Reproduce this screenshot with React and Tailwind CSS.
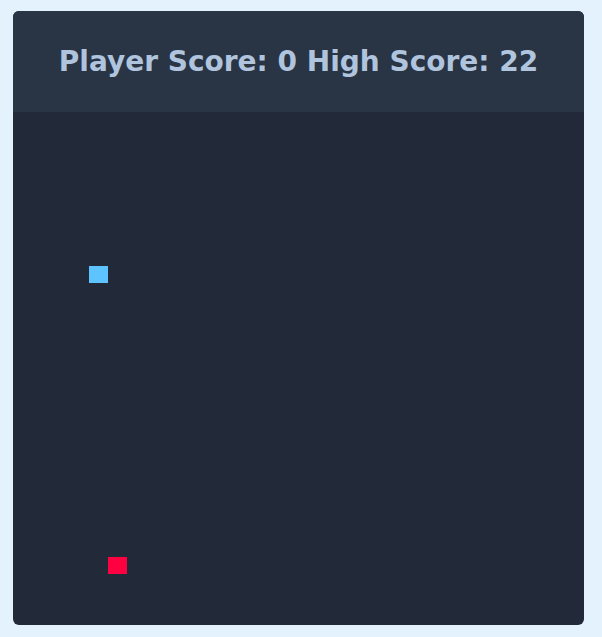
export default function App() {
  return (
    <div className="min-h-[637px] w-[602px] bg-[#e3f2fd] pl-[13px] pt-[11px]">
      <div className="w-[571px] overflow-hidden rounded-md bg-[#222938]">
        <div className="flex h-[101px] items-center justify-center bg-[#293445]">
          <h1
            className="text-[28px] font-bold leading-none text-[#b0c4de]"
            style={{ fontFamily: '"DejaVu Sans", sans-serif' }}
          >
            Player Score: 0 High Score: 22
          </h1>
        </div>
        <div className="relative h-[513px]">
          <div className="absolute left-[76px] top-[154px] h-[17px] w-[19px] bg-[#5ec4ff]" />
          <div className="absolute left-[95px] top-[445px] h-[17px] w-[19px] bg-[#ff0040]" />
        </div>
      </div>
    </div>
  );
}
